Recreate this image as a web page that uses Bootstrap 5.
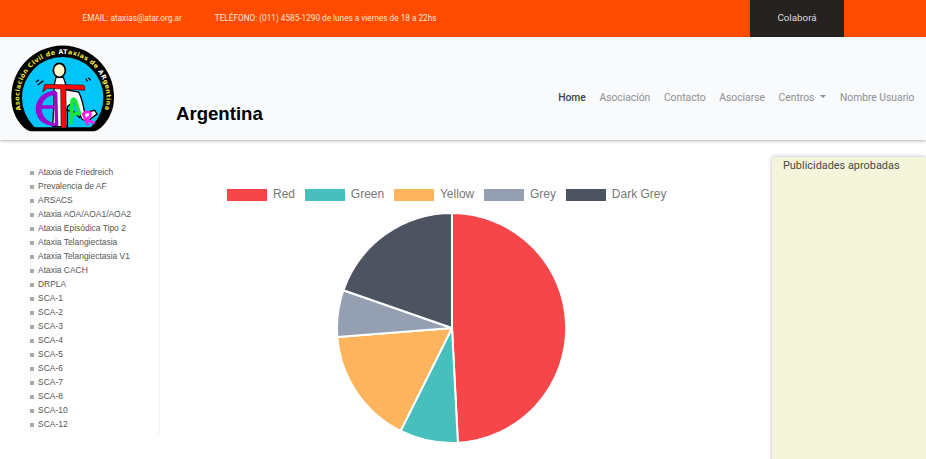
<!DOCTYPE html>
<html lang="es">
<head>
<meta charset="utf-8">
<meta name="viewport" content="width=device-width, initial-scale=1">
<title>ATAR - Argentina</title>
<link href="https://cdn.jsdelivr.net/npm/bootstrap@5.3.0/dist/css/bootstrap.min.css" rel="stylesheet">
<style>
body{font-family:Roboto,"Liberation Sans",sans-serif;height:459px;overflow:hidden;background:#fff}
.topbar{height:37px;background:#ff4b00;color:#ffe4d8;font-size:8.22px;padding-left:82.5px}
.tel{margin-left:33px}
.colabora{width:94px;margin-right:82px;background:#262220;color:#ddd;font-size:9.8px}
.main-nav{height:103px;background:#f8fafc;padding:7px 11.5px 0 10px;box-shadow:0 1px 3px rgba(0,0,0,.3);position:relative}
.brand-logo{width:105px;height:88px}
.site-title{font:bold 18.6px/22px "Liberation Sans",Arial,sans-serif;color:#000;margin:59px 0 0 61px}
.main-nav .nav{gap:13.6px;margin-top:45px;font-size:10.3px;line-height:18px}
.main-nav .nav-link{padding:0;color:#8d8f90}
.main-nav .nav-link.active{color:#404244;font-weight:500}
.main-nav .dropdown-toggle::after{margin-left:6px;vertical-align:3px}
.disease-col{width:160px;height:274px;border-right:2px solid #f6f6f6;padding:5px 0 0 30px;margin-top:20px}
.disease-list{font:8.46px/14px "Liberation Sans",Arial,sans-serif;color:#555}
.disease-list li{display:flex;align-items:center;height:14px}
.disease-list li::before{content:"";width:4px;height:4px;background:#aaa;margin:1px 4px 0 0}
.chart-area{padding:46px 0 0 67px}
.legend{font:12px/16px "Liberation Sans",Arial,sans-serif;color:#777;gap:9.8px}
.swatch{width:40px;height:12px;margin:1px 6px 0 0}
.pie{width:232px;height:232px;margin:9.5px 0 0 109px}
.ads{width:154px;height:320px;margin-top:17px;background:#f4f4da;border-radius:3px;box-shadow:0 0 4px rgba(0,0,0,.3);font-size:10.9px;line-height:14px;color:#484a45;padding:2px 0 0 11px}
</style>
</head>
<body>
<div class="topbar d-flex align-items-center">
  <span>EMAIL: ataxias@atar.org.ar</span>
  <span class="tel">TELÉFONO: (011) 4585-1290 de lunes a viernes de 18 a 22hs</span>
  <a class="colabora ms-auto h-100 d-flex align-items-center justify-content-center text-decoration-none" href="#">Colaborá</a>
</div>
<header class="main-nav d-flex align-items-start">
  <svg class="brand-logo" viewBox="30 24 315 264" role="img" aria-label="Asociación Civil de Ataxias de Argentina">
    <defs>
      <path id="ring" d="M63 222A131 131 0 1 1 314 222"/>
      <clipPath id="floor"><path d="M40 40H340V274H40Z"/></clipPath>
    </defs>
    <path d="M98 286C70 286 38 240 35 200A154 154 0 1 1 341 200C338 240 304 286 278 286Z"/>
    <circle cx="188" cy="185" r="122" fill="#00c5fb" clip-path="url(#floor)"/>
    <text font-family="DejaVu Sans" font-weight="bold" font-size="19" fill="#f7ed3c"><textPath href="#ring" textLength="486">Asociación Civil de <tspan fill="#fff">AT</tspan>axias de <tspan fill="#fff">AR</tspan>gentina</textPath></text>
    <!-- seated figure: torso, legs, foot -->
    <path d="M168 124L190 124Q197 140 200 162L236 168Q247 190 254 230L284 223 291 234 262 256 246 250 222 196 202 212V272H158L162 200 162 150Z" fill="#fff" stroke="#000" stroke-width="4"/>
    <path d="M198 222L222 228 240 246" fill="none" stroke="#000" stroke-width="5"/>
    <ellipse cx="178" cy="103" rx="18" ry="21" fill="#fffdd0" stroke="#000" stroke-width="5"/>
    <path d="M108 138L117 131M113 147L130 134M257 128L263 136M265 125L272 133" stroke="#000" stroke-width="4"/>
    <!-- wheel -->
    <path d="M168 164C132 164 107 188 107 220 107 250 132 270 165 271L165 262C142 258 126 242 125 218H164V208H126C130 190 145 178 168 176Z" fill="#9909cf"/>
    <path d="M167 168L170 270" stroke="#9909cf" stroke-width="10"/>
    <path d="M134 145L250 147Q257 150 254 163L198 160 199 276 183 276 182 159 142 157 128 168Z" fill="#ff0505" stroke="#000" stroke-width="1.5"/>
    <path d="M212 266L216 196Q220 182 227 196L240 238M213 238L238 230" fill="none" stroke="#18e63b" stroke-width="11"/>
    <path d="M250 236L264 268M248 238C256 222 279 226 269 242L257 250 284 262" fill="none" stroke="#ff1cf0" stroke-width="8"/>
  </svg>
  <h1 class="site-title">Argentina</h1>
  <nav class="nav ms-auto flex-nowrap">
    <a class="nav-link active" href="#">Home</a>
    <a class="nav-link" href="#">Asociación</a>
    <a class="nav-link" href="#">Contacto</a>
    <a class="nav-link" href="#">Asociarse</a>
    <a class="nav-link dropdown-toggle" href="#">Centros</a>
    <a class="nav-link" href="#">Nombre Usuario</a>
  </nav>
</header>
<main class="d-flex align-items-start">
  <aside class="disease-col flex-shrink-0">
    <ul class="disease-list list-unstyled mb-0">
      <li>Ataxia de Friedreich</li><li>Prevalencia de AF</li><li>ARSACS</li><li>Ataxia AOA/AOA1/AOA2</li><li>Ataxia Episódica Tipo 2</li><li>Ataxia Telangiectasia</li><li>Ataxia Telangiectasia V1</li><li>Ataxia CACH</li><li>DRPLA</li><li>SCA-1</li><li>SCA-2</li><li>SCA-3</li><li>SCA-4</li><li>SCA-5</li><li>SCA-6</li><li>SCA-7</li><li>SCA-8</li><li>SCA-10</li><li>SCA-12</li>
    </ul>
  </aside>
  <section class="chart-area flex-grow-1">
    <div class="legend d-flex">
      <div class="d-flex align-items-center"><span class="swatch" style="background:#f7464a"></span>Red</div>
      <div class="d-flex align-items-center"><span class="swatch" style="background:#46bfbd"></span>Green</div>
      <div class="d-flex align-items-center"><span class="swatch" style="background:#fdb45c"></span>Yellow</div>
      <div class="d-flex align-items-center"><span class="swatch" style="background:#949fb1"></span>Grey</div>
      <div class="d-flex align-items-center"><span class="swatch" style="background:#4d5360"></span>Dark Grey</div>
    </div>
    <svg class="pie d-block" viewBox="-116 -116 232 232" stroke="#fff" stroke-width="2" stroke-linejoin="bevel">
      <path fill="#f7464a" d="M0 0V-115A115 115 0 0 1 5.9 114.8Z"/>
      <path fill="#46bfbd" d="M0 0L5.9 114.8A115 115 0 0 1 -51.4 102.9Z"/>
      <path fill="#fdb45c" d="M0 0L-51.4 102.9A115 115 0 0 1 -114.7 8.9Z"/>
      <path fill="#949fb1" d="M0 0L-114.7 8.9A115 115 0 0 1 -108.6 -37.8Z"/>
      <path fill="#4d5360" d="M0 0L-108.6 -37.8A115 115 0 0 1 0 -115Z"/>
    </svg>
  </section>
  <aside class="ads flex-shrink-0">Publicidades aprobadas</aside>
</main>
<script src="https://cdn.jsdelivr.net/npm/bootstrap@5.3.0/dist/js/bootstrap.bundle.min.js"></script>
</body>
</html>
